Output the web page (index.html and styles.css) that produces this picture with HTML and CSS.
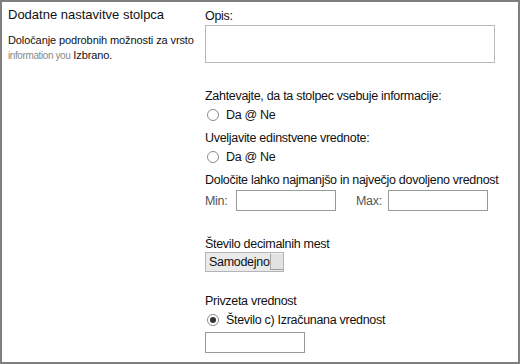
FILE: index.html
```html
<!DOCTYPE html>
<html lang="sl">
<head>
    <meta charset="UTF-8">
    <meta name="viewport" content="width=device-width, initial-scale=1.0">
    <title>Dodatne nastavitve stolpca</title>
    <link rel="stylesheet" href="styles.css">
</head>
<body>

    <div class="panel">
        <div class="side">
            <h1>Dodatne nastavitve stolpca</h1>
            <p class="hint">Določanje podrobnih možnosti za vrsto<br><span class="faded">information you</span> Izbrano.</p>
        </div>

        <div class="fields">
            <div class="label first">Opis:</div>
            <div class="textarea"></div>

            <div class="label req">Zahtevajte, da ta stolpec vsebuje informacije:</div>
            <div class="option"><span class="radio"></span>Da @ Ne</div>

            <div class="label">Uveljavite edinstvene vrednote:</div>
            <div class="option"><span class="radio"></span>Da @ Ne</div>

            <div class="label">Določite lahko najmanjšo in največjo dovoljeno vrednost</div>
            <div class="range">
                <span class="small-label">Min:</span>
                <span class="box"></span>
                <span class="small-label max">Max:</span>
                <span class="box"></span>
            </div>

            <div class="label decimals">Število decimalnih mest</div>
            <div class="select">
                <span class="select-text">Samodejno</span>
                <span class="select-btn"></span>
            </div>

            <div class="label default">Privzeta vrednost</div>
            <div class="option"><span class="radio checked"></span>Število c) Izračunana vrednost</div>
            <div class="box single"></div>
        </div>
    </div>

</body>
</html>
```

FILE: styles.css
```css
html, body {
    margin: 0;
    padding: 0;
    background-color: #fff;
}
body {
    font-family: 'Liberation Sans', Arial, sans-serif;
    color: #111;
}
.panel {
    width: 520px;
    height: 364px;
    box-sizing: border-box;
    border: 2px solid #7f7f7f;
    display: flex;
}
.side {
    width: 196px;
    padding: 5px 0 0 6px;
    box-sizing: border-box;
}
h1 {
    margin: 0;
    font-size: 13px;
    font-weight: normal;
    line-height: 16px;
    color: #111;
}
.hint {
    margin: 10px 0 0 0;
    font-size: 11px;
    line-height: 15px;
    letter-spacing: -0.1px;
    color: #111;
}
.faded {
    color: #8a8a8a;
    font-size: 10px;
    letter-spacing: -0.4px;
}
.fields {
    flex: 1;
    padding: 6px 0 0 7px;
}
.label {
    font-size: 12.5px;
    line-height: 16px;
    letter-spacing: -0.3px;
    color: #111;
    margin-top: 7px;
}
.label.first {
    margin-top: 0;
}
.label.req {
    margin-top: 25px;
}
.label.decimals {
    margin-top: 25px;
}
.label.default {
    margin-top: 21px;
}
.textarea {
    width: 290px;
    height: 38px;
    box-sizing: border-box;
    border: 1px solid #b9b9b9;
    margin-top: 1px;
}
.option {
    display: flex;
    align-items: center;
    height: 17px;
    margin-top: 2px;
    padding-left: 2px;
    font-size: 12.5px;
    letter-spacing: -0.3px;
}
.radio {
    width: 12px;
    height: 12px;
    box-sizing: border-box;
    border: 1px solid #8c8c8c;
    border-radius: 50%;
    background: #fff;
    margin-right: 7px;
    position: relative;
}
.radio.checked::after {
    content: "";
    position: absolute;
    left: 2px;
    top: 2px;
    width: 6px;
    height: 6px;
    border-radius: 50%;
    background: #333;
}
.range {
    display: flex;
    align-items: center;
    margin-top: 2px;
    height: 21px;
}
.small-label {
    font-size: 12.5px;
    letter-spacing: -0.3px;
    color: #555;
    width: 31px;
}
.small-label.max {
    margin-left: 20px;
    width: 32px;
}
.box {
    width: 100px;
    height: 21px;
    box-sizing: border-box;
    border: 1px solid #9a9a9a;
    background: #fff;
    display: block;
}
.box.single {
    margin-top: 4px;
}
.select {
    display: flex;
    width: 79px;
    height: 20px;
    box-sizing: border-box;
    border: 1px solid #b5b5b5;
    background: #eaeaea;
}
.select-text {
    flex: 1;
    font-size: 12.5px;
    line-height: 18px;
    padding-left: 3px;
    letter-spacing: -0.3px;
    color: #111;
}
.select-btn {
    width: 17px;
    border-left: 1px solid #a8a8a8;
    border-bottom: 1px solid #9c9c9c;
    border-top: 1px solid #f4f4f4;
    background: #e2e2e2;
    box-sizing: border-box;
    height: 17px;
}
```
